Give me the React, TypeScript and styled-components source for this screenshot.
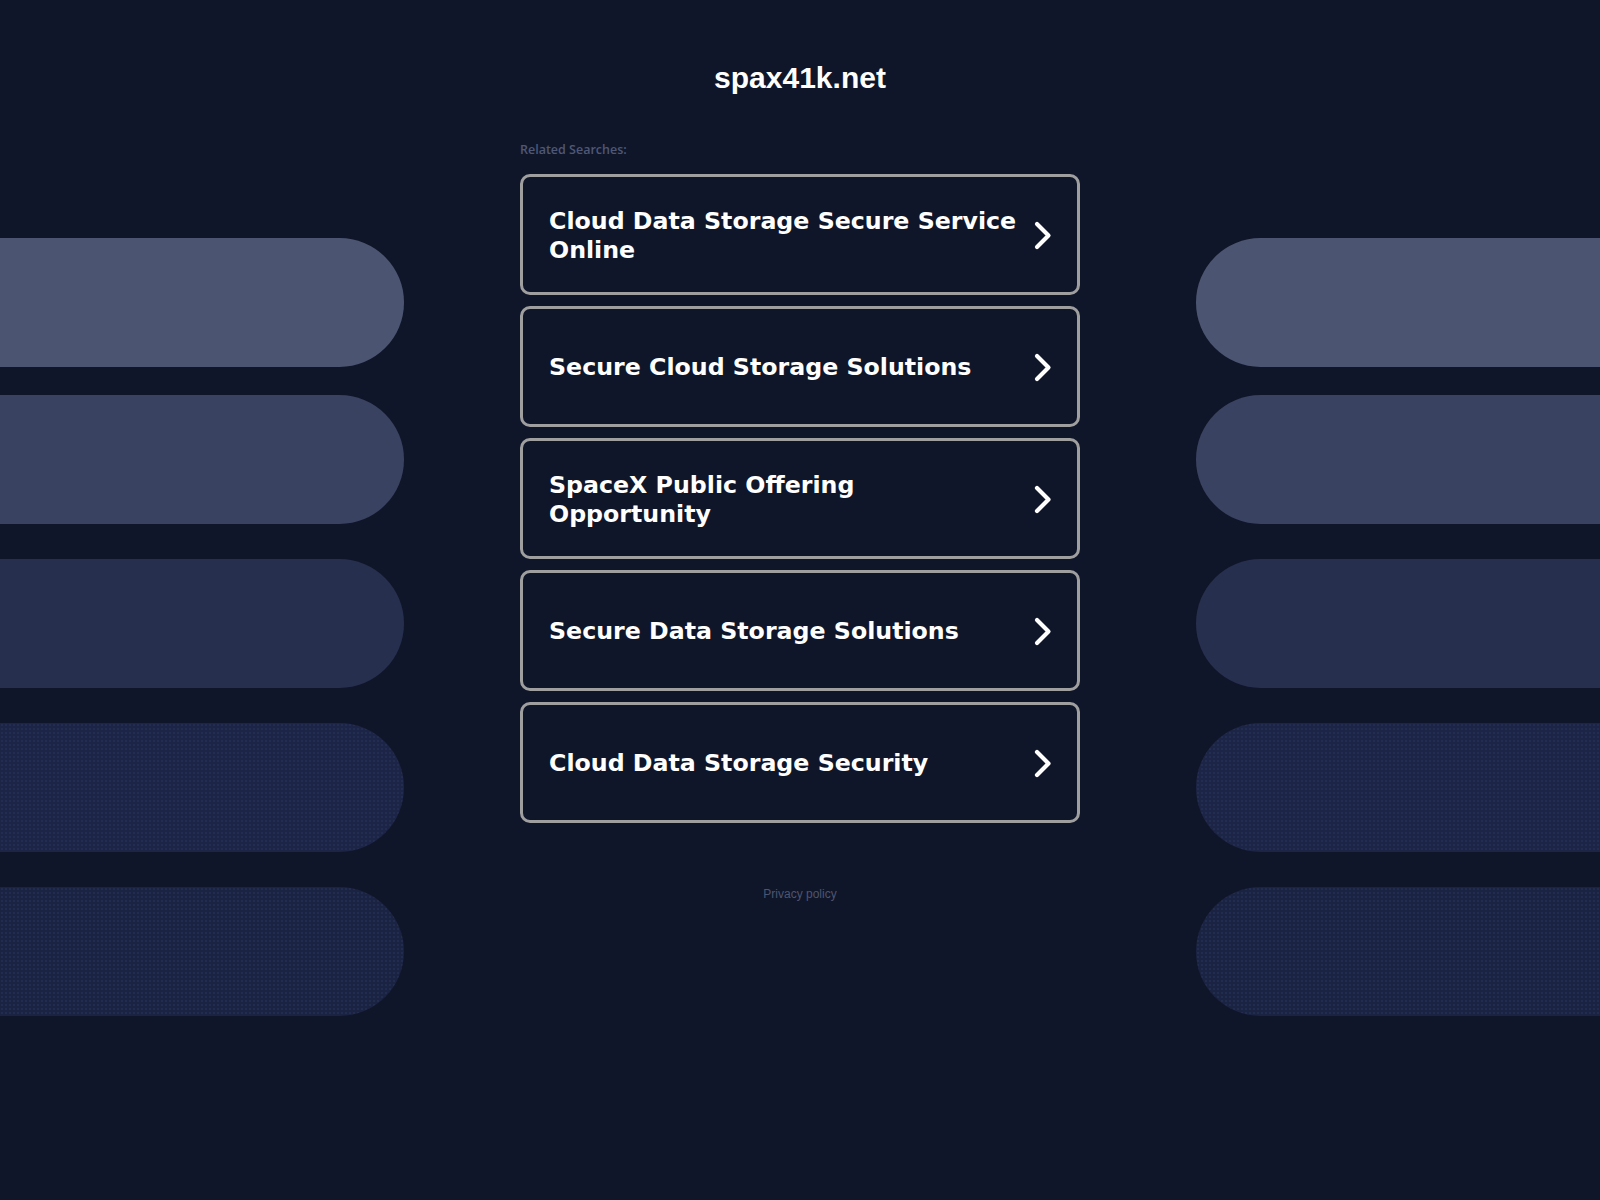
import React from "react";
import styled, { createGlobalStyle } from "styled-components";

const Global = createGlobalStyle`
  html, body { margin: 0; padding: 0; background: #101629; }
  body { min-height: 1200px; overflow: hidden; }
`;

const Page = styled.div`
  display: grid;
  grid-template-columns: 404px 1fr 404px;
  width: 1600px;
  min-height: 1200px;
  background: #101629;
`;

const Side = styled.div`
  display: flex;
  flex-direction: column;
  padding-top: 238px;
`;

const dotted = `
  background-image: radial-gradient(rgba(55, 70, 115, 0.4) 0.6px, transparent 0.9px);
  background-size: 4px 4px;
`;

const Pill = styled.div<{ $color: string; $top: number; $side: "left" | "right"; $dots?: boolean }>`
  height: 129px;
  margin-top: ${(p) => p.$top}px;
  background-color: ${(p) => p.$color};
  ${(p) => (p.$dots ? dotted : "")}
  border-radius: ${(p) => (p.$side === "left" ? "0 65px 65px 0" : "65px 0 0 65px")};
`;

const Center = styled.main`
  width: 560px;
  justify-self: center;
  display: flex;
  flex-direction: column;
  padding-top: 60px;
`;

const Title = styled.h1`
  margin: 0;
  font-family: "Liberation Sans", Arial, sans-serif;
  font-weight: 700;
  font-size: 30px;
  line-height: 36px;
  color: #ffffff;
  text-align: center;
`;

const Label = styled.div`
  margin-top: 46px;
  font-family: "Open Sans", "DejaVu Sans", sans-serif;
  font-weight: 600;
  font-size: 12.5px;
  line-height: 16px;
  color: #4e5876;
`;

const List = styled.div`
  margin-top: 16px;
  display: flex;
  flex-direction: column;
  gap: 11px;
`;

const Card = styled.a`
  box-sizing: border-box;
  height: 121px;
  border: 3px solid #9f9f9f;
  border-radius: 10px;
  display: flex;
  align-items: center;
  justify-content: space-between;
  padding: 2px 25px 0 26px;
  text-decoration: none;
  color: #ffffff;
  background: #101629;
`;

const CardText = styled.span`
  font-family: "DejaVu Sans", Verdana, sans-serif;
  font-weight: 700;
  font-size: 23.7px;
  line-height: 29px;
  max-width: 475px;
`;

const Footer = styled.div`
  margin-top: 64px;
  text-align: center;
  font-family: "Liberation Sans", Arial, sans-serif;
  font-size: 12px;
  line-height: 14px;
  color: #4b5571;
`;

const Chevron = () => (
  <svg width="18" height="29" viewBox="0 0 18 29" fill="none">
    <path d="M3 3 L14.5 14.5 L3 26" stroke="#ffffff" strokeWidth="4.2" strokeLinecap="round" strokeLinejoin="round" />
  </svg>
);

const pills = [
  { color: "#4b5571", top: 0 },
  { color: "#394260", top: 28 },
  { color: "#262f4d", top: 35 },
  { color: "#1c2545", top: 35, dots: true },
  { color: "#1a2342", top: 35, dots: true },
];

const items = [
  "Cloud Data Storage Secure Service Online",
  "Secure Cloud Storage Solutions",
  "SpaceX Public Offering Opportunity",
  "Secure Data Storage Solutions",
  "Cloud Data Storage Security",
];

export default function App() {
  return (
    <>
      <Global />
      <Page>
        <Side>
          {pills.map((p, i) => (
            <Pill key={i} $color={p.color} $top={p.top} $side="left" $dots={p.dots} />
          ))}
        </Side>
        <Center>
          <Title>spax41k.net</Title>
          <Label>Related Searches:</Label>
          <List>
            {items.map((t) => (
              <Card key={t} href="#">
                <CardText>{t}</CardText>
                <Chevron />
              </Card>
            ))}
          </List>
          <Footer>Privacy policy</Footer>
        </Center>
        <Side>
          {pills.map((p, i) => (
            <Pill key={i} $color={p.color} $top={p.top} $side="right" $dots={p.dots} />
          ))}
        </Side>
      </Page>
    </>
  );
}
